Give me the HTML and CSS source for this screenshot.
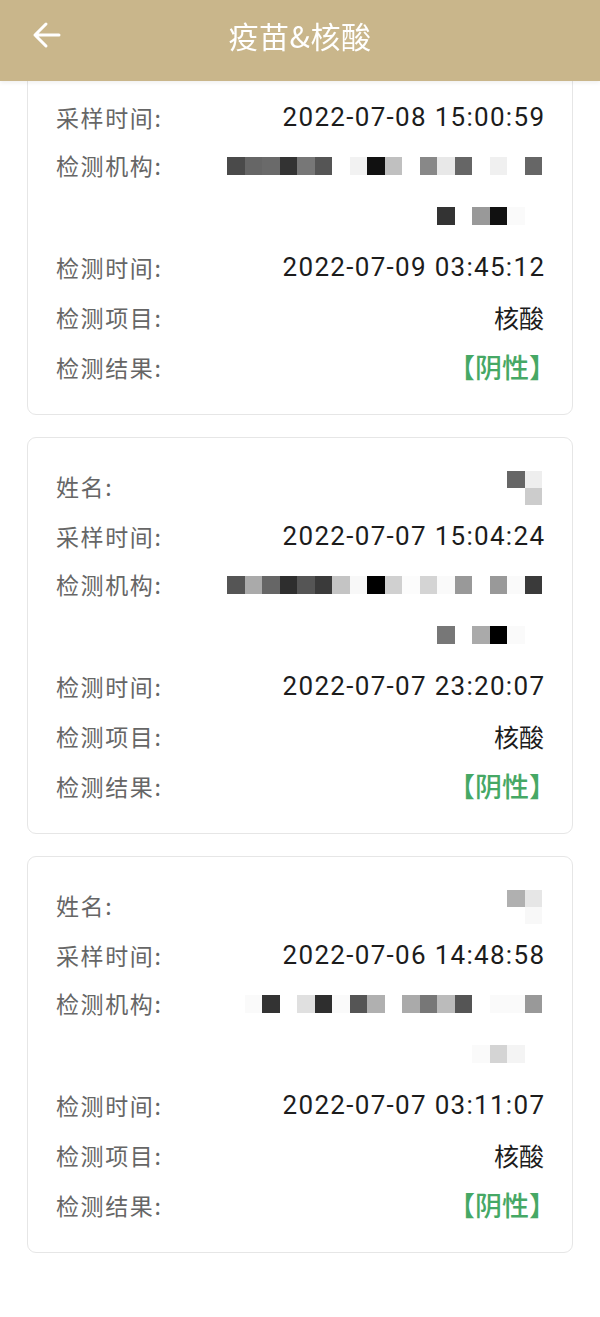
FILE: index.html
```html
<!DOCTYPE html>
<html lang="zh-CN">
<head>
<meta charset="utf-8">
<title>疫苗&amp;核酸</title>
<link rel="stylesheet" href="styles.css">
</head>
<body>
<header class="topbar">
  <svg class="back" width="30" height="28" viewBox="0 0 30 28" aria-hidden="true">
    <path d="M27 14H3M14 3L3 14l11 11" fill="none" stroke="#fff" stroke-width="3" stroke-linecap="round" stroke-linejoin="round"/>
  </svg>
  <h1 class="title">疫苗&amp;核酸</h1>
</header>

<main class="list">
  <section class="card">
    <div class="row"><span class="label">姓名:</span><span class="value"></span></div>
    <div class="row"><span class="label">采样时间:</span><span class="value num">2022-07-08 15:00:59</span></div>
    <div class="row tall">
      <span class="label">检测机构:</span>
      <div class="mosaic">
        <div class="mline"><i class="k4a"></i><i class="k66"></i><i class="k6a"></i><i class="k33"></i><i class="k77"></i><i class="k55"></i><i></i><i class="kf2"></i><i class="k11"></i><i class="kc0"></i><i></i><i class="k88"></i><i class="ke8"></i><i class="k66"></i><i></i><i class="kf0"></i><i></i><i class="k66"></i></div>
        <div class="mline"><i class="k33"></i><i></i><i class="k99"></i><i class="k11"></i><i class="kfa"></i><i></i></div>
      </div>
    </div>
    <div class="row"><span class="label">检测时间:</span><span class="value num">2022-07-09 03:45:12</span></div>
    <div class="row"><span class="label">检测项目:</span><span class="value">核酸</span></div>
    <div class="row"><span class="label">检测结果:</span><span class="value result">【阴性】</span></div>
  </section>

  <section class="card">
    <div class="row">
      <span class="label">姓名:</span>
      <div class="namebox">
        <div class="nline"><i class="k66"></i><i class="kee"></i></div>
        <div class="nline"><i></i><i class="kcc"></i></div>
      </div>
    </div>
    <div class="row"><span class="label">采样时间:</span><span class="value num">2022-07-07 15:04:24</span></div>
    <div class="row tall">
      <span class="label">检测机构:</span>
      <div class="mosaic">
        <div class="mline"><i class="k55"></i><i class="kaa"></i><i class="k66"></i><i class="k2e"></i><i class="k55"></i><i class="k3a"></i><i class="kc4"></i><i class="kf8"></i><i class="k00"></i><i class="kd0"></i><i class="kfc"></i><i class="kd4"></i><i class="kfa"></i><i class="k99"></i><i></i><i class="k99"></i><i class="kfa"></i><i class="k3a"></i></div>
        <div class="mline"><i class="k77"></i><i></i><i class="kaa"></i><i class="k00"></i><i class="kfa"></i><i></i></div>
      </div>
    </div>
    <div class="row"><span class="label">检测时间:</span><span class="value num">2022-07-07 23:20:07</span></div>
    <div class="row"><span class="label">检测项目:</span><span class="value">核酸</span></div>
    <div class="row"><span class="label">检测结果:</span><span class="value result">【阴性】</span></div>
  </section>

  <section class="card">
    <div class="row">
      <span class="label">姓名:</span>
      <div class="namebox">
        <div class="nline"><i class="kb0"></i><i class="ke6"></i></div>
        <div class="nline"><i></i><i class="kf8"></i></div>
      </div>
    </div>
    <div class="row"><span class="label">采样时间:</span><span class="value num">2022-07-06 14:48:58</span></div>
    <div class="row tall">
      <span class="label">检测机构:</span>
      <div class="mosaic">
        <div class="mline"><i class="kfa"></i><i class="k33"></i><i></i><i class="ke0"></i><i class="k2e"></i><i class="kfa"></i><i class="k55"></i><i class="kb0"></i><i></i><i class="kaa"></i><i class="k77"></i><i class="kbb"></i><i class="k55"></i><i></i><i class="kfa"></i><i class="kfa"></i><i class="k99"></i></div>
        <div class="mline"><i class="kfa"></i><i class="kd4"></i><i class="kf4"></i><i></i></div>
      </div>
    </div>
    <div class="row"><span class="label">检测时间:</span><span class="value num">2022-07-07 03:11:07</span></div>
    <div class="row"><span class="label">检测项目:</span><span class="value">核酸</span></div>
    <div class="row"><span class="label">检测结果:</span><span class="value result">【阴性】</span></div>
  </section>
</main>
</body>
</html>
```

FILE: styles.css
```css
* { box-sizing: border-box; }
html, body {
  margin: 0;
  padding: 0;
  background: #fff;
  font-family: "Noto Sans CJK SC", "Noto Sans", sans-serif;
}

.topbar {
  position: fixed;
  top: 0;
  left: 0;
  right: 0;
  height: 81px;
  background: #c9b68b;
  display: flex;
  align-items: center;
  justify-content: center;
  box-shadow: 0 2px 4px rgba(0, 0, 0, 0.06);
  z-index: 10;
}
.back {
  position: absolute;
  left: 32px;
  top: 21px;
}
.title {
  margin: 0 0 12px 0;
  color: #fff;
  font-weight: 400;
  font-size: 30px;
  line-height: 1;
  letter-spacing: 0.5px;
}

.list {
  padding: 18px 27px 64px;
  display: flex;
  flex-direction: column;
  gap: 22px;
}

.card {
  border: 1px solid #e6e6e6;
  border-radius: 9px;
  padding: 24px 28px 21px 28px;
  background: #fff;
}

.row {
  display: flex;
  justify-content: space-between;
  align-items: center;
  height: 50px;
  padding-bottom: 2px;
}
.row.tall {
  height: 100px;
  padding-bottom: 0;
  align-items: flex-start;
}
.label {
  font-size: 23px;
  letter-spacing: 1.6px;
  color: #666;
  line-height: 44px;
  white-space: nowrap;
}
.value {
  font-size: 25px;
  color: #1c1c1c;
  line-height: 44px;
  white-space: nowrap;
}
.value.num {
  font-family: Roboto, "Noto Sans CJK SC", sans-serif;
  font-size: 26px;
  letter-spacing: 1.3px;
  margin-right: -1.3px;
}
.value.result {
  color: #46a865;
  font-size: 27px;
  font-weight: 500;
  margin-right: -12px;
}

.mosaic {
  display: flex;
  flex-direction: column;
  align-items: flex-end;
  margin-right: 2px;
}
.mline {
  display: flex;
  height: 50px;
  align-items: center;
  padding-bottom: 4px;
}
.mline i, .nline i {
  display: block;
  width: 17.5px;
  height: 18px;
}
.namebox {
  display: flex;
  flex-direction: column;
  align-items: flex-end;
  margin-right: 2px;
  margin-top: 4px;
}
.nline {
  display: flex;
}
.nline i { height: 17px; }

.k00 { background: #000; }
.k11 { background: #111; }
.k2e { background: #2e2e2e; }
.k33 { background: #333; }
.k3a { background: #3a3a3a; }
.k4a { background: #4a4a4a; }
.k55 { background: #555; }
.k66 { background: #666; }
.k6a { background: #6a6a6a; }
.k77 { background: #777; }
.k88 { background: #888; }
.k99 { background: #999; }
.kaa { background: #aaa; }
.kb0 { background: #b0b0b0; }
.kbb { background: #bbb; }
.kc0 { background: #c0c0c0; }
.kc4 { background: #c4c4c4; }
.kcc { background: #ccc; }
.kd0 { background: #d0d0d0; }
.kd4 { background: #d4d4d4; }
.ke0 { background: #e0e0e0; }
.ke6 { background: #e6e6e6; }
.ke8 { background: #e8e8e8; }
.kee { background: #eee; }
.kf0 { background: #f0f0f0; }
.kf2 { background: #f2f2f2; }
.kf4 { background: #f4f4f4; }
.kf8 { background: #f8f8f8; }
.kfa { background: #fafafa; }
.kfc { background: #fcfcfc; }
```
